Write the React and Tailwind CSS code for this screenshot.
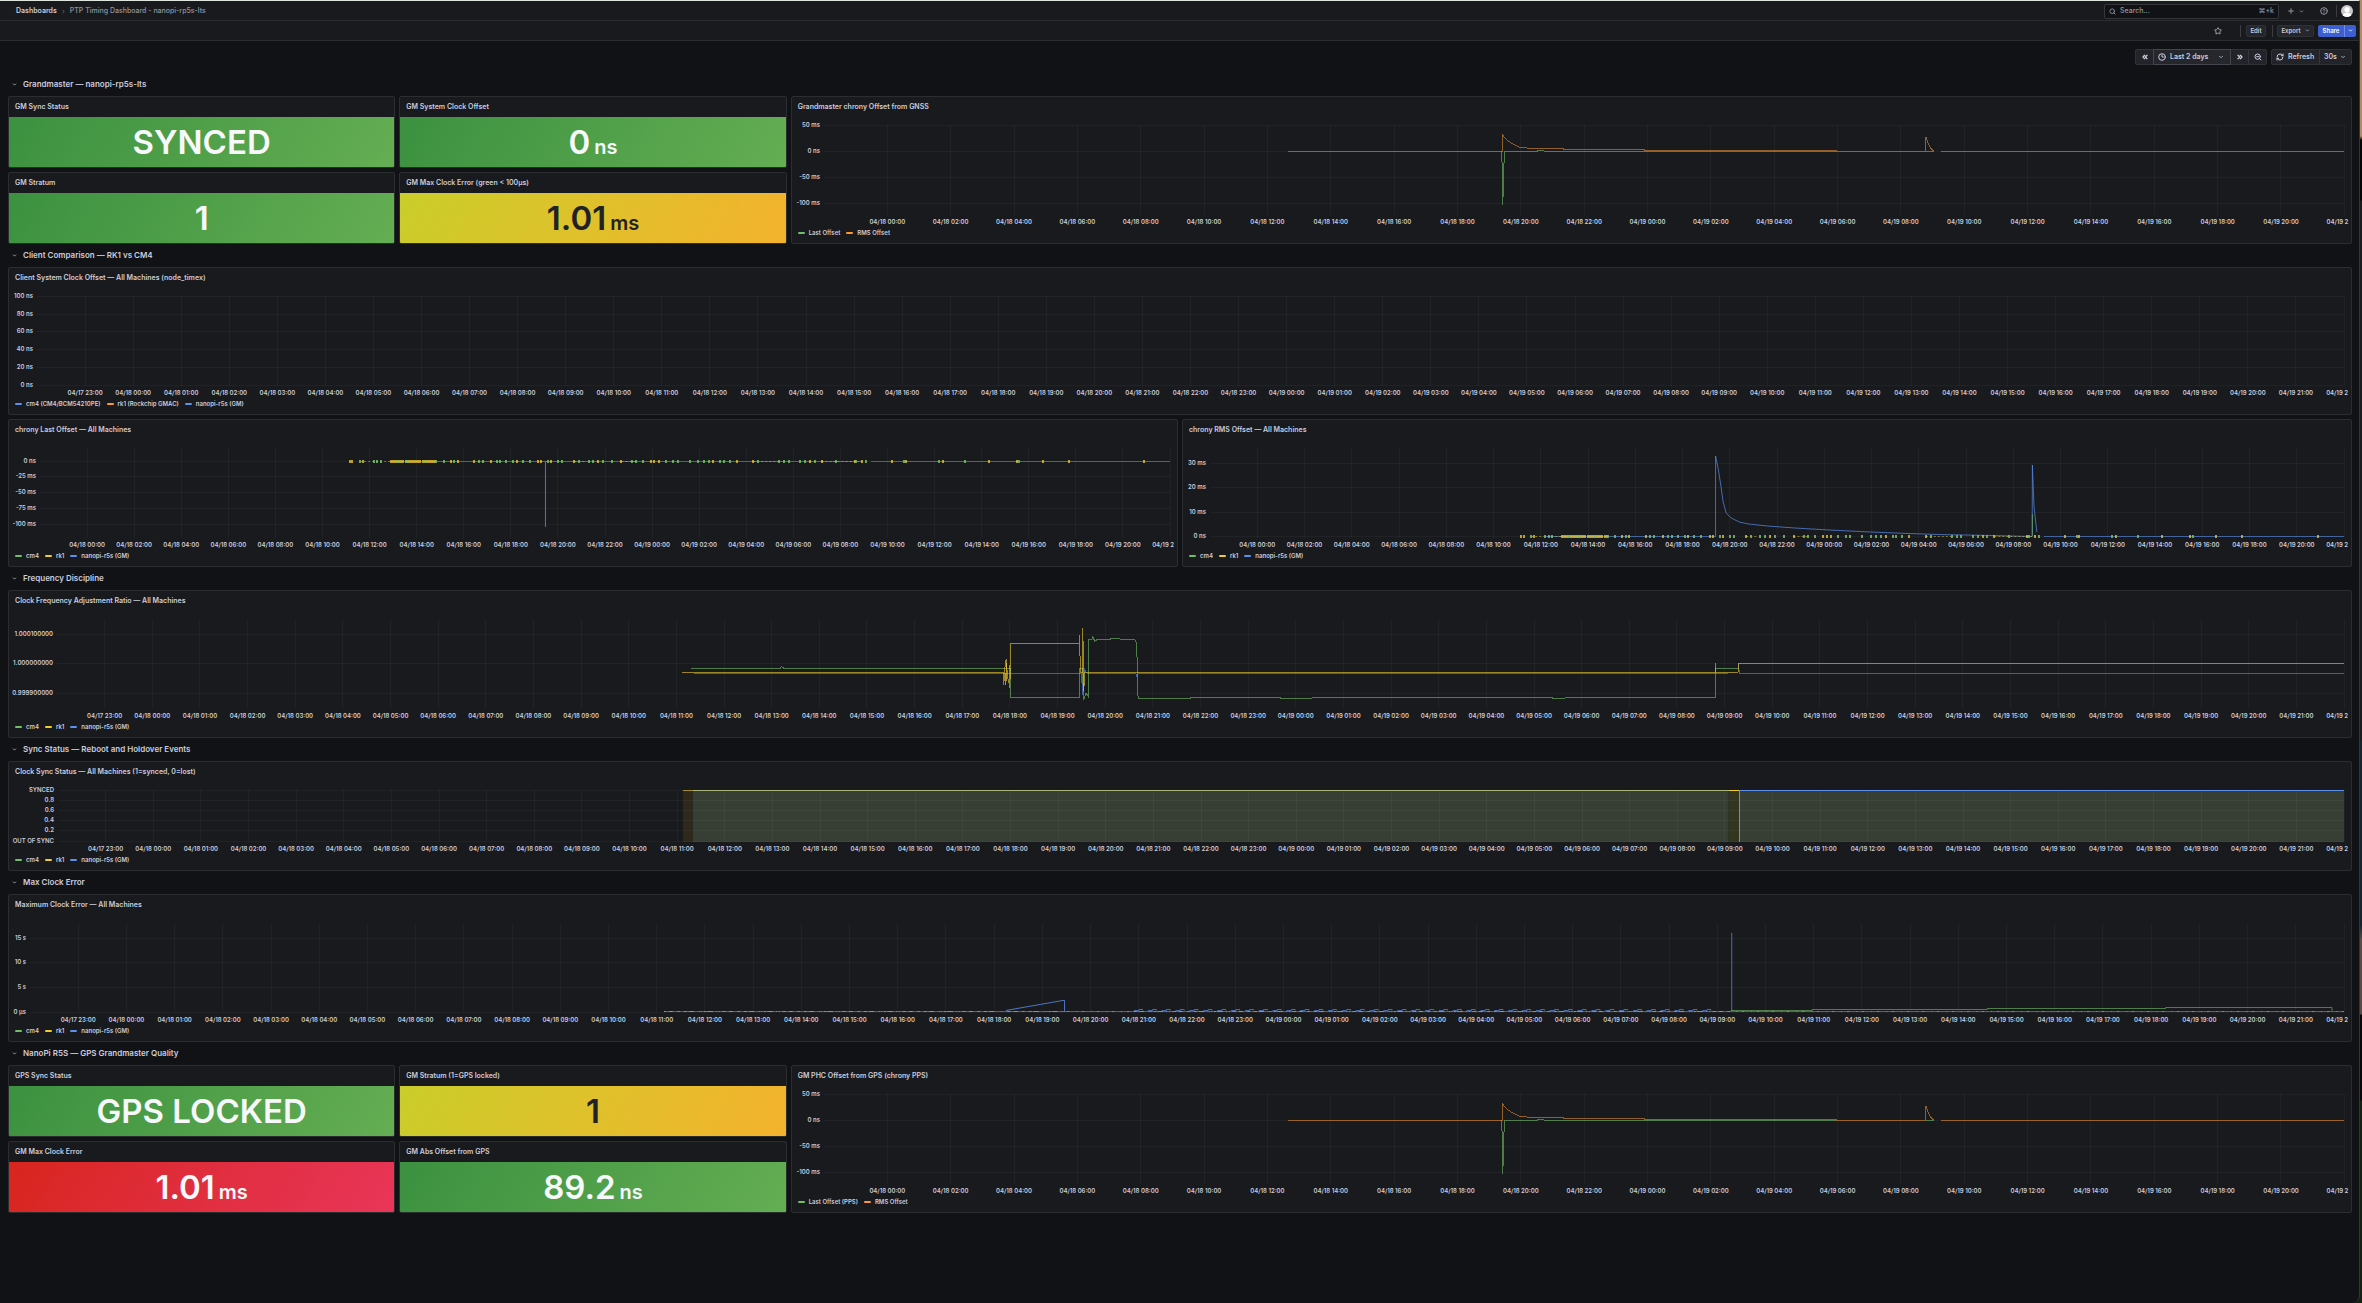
import React from 'react';
import { ChevronDown, ChevronsLeft, ChevronsRight, CircleHelp, Clock3, Plus, RefreshCw, Search, Star, ZoomOut } from 'lucide-react';

const GREEN = '#73bf69';
const YELLOW = '#f2cc2c';
const BLUE = '#5b8ff0';
const ORANGE = '#ff9830';

// the dashboards cover 48 hours, starting 04/17 22:00
const HOURS = 48;

const timeLabel = (h) => {
  if (h === HOURS) return '04/19 2';
  const day = 17 + Math.floor((h + 22) / 24);
  const hour = String((h + 22) % 24).padStart(2, '0');
  return `04/${day} ${hour}:00`;
};

// points are [hours since start, y inside the plot]
const toPath = (points) => points.map(([x, y], i) => `${i ? 'L' : 'M'}${x} ${y}`).join(' ');
const toMarks = (hours, y, h = 3) => hours.map((x) => `M${x} ${y}v${h}`).join(' ');
const range = (from, to, step) => {
  const out = [];
  for (let v = from; v <= to; v += step) out.push(Number(v.toFixed(3)));
  return out;
};

const Chart = ({ left, height = 90, step = 2, yTicks, lines = [], areas = [] }) => {
  const hours = range(step, HOURS, step);
  return (
    <div className={`${left} mr-[7px] mt-2`}>
      <svg className={`block w-full overflow-visible ${height === 90 ? 'h-[102px]' : 'h-16'}`}>
        <svg x="0" y="0" width="100%" height={height} viewBox={`0 0 ${HOURS} ${height}`} preserveAspectRatio="none">
          {areas.map((a) => (
            <rect key={a.from} x={a.from} y="0" width={a.to - a.from} height={height} fill={a.fill} />
          ))}
        </svg>
        <g stroke="#ccccdc" strokeOpacity="0.05" shapeRendering="crispEdges">
          {yTicks.map(([label, y]) => (
            <line key={label} x1="0" x2="100%" y1={y + 0.5} y2={y + 0.5} />
          ))}
          {hours.map((h) => (
            <line key={h} x1={`${(h / HOURS) * 100}%`} x2={`${(h / HOURS) * 100}%`} y1="0" y2={height} />
          ))}
        </g>
        <svg x="0" y="0" width="100%" height={height + 1} viewBox={`0 0 ${HOURS} ${height + 1}`} preserveAspectRatio="none">
          {lines.map((l, i) => (
            <path
              key={i}
              d={l.d}
              fill="none"
              stroke={l.color}
              strokeOpacity={l.opacity ?? 0.6}
              strokeWidth={l.width ?? 1}
              strokeDasharray={l.dash}
              vectorEffect="non-scaling-stroke"
              shapeRendering="crispEdges"
            />
          ))}
        </svg>
        <g fill="#ccccdc" fontSize="6" fontWeight="600">
          {yTicks.map(([label, y]) => (
            <text key={label} x="-4" y={y + 2} textAnchor="end">{label}</text>
          ))}
          {hours.map((h) => (
            <text
              key={h}
              x={`${(h / HOURS) * 100}%`}
              y={height + 9}
              dx={h === HOURS ? 4 : 0}
              textAnchor={h === HOURS ? 'end' : 'middle'}
            >
              {timeLabel(h)}
            </text>
          ))}
        </g>
      </svg>
    </div>
  );
};

const Legend = ({ items }) => (
  <ul className="flex h-3 items-center gap-1.5 px-1.5 text-[6px] font-semibold leading-3">
    {items.map(([name, color]) => (
      <li key={name} className="flex items-center gap-1">
        <span className="h-0.5 w-[7px] rounded-full" style={{ backgroundColor: color }} />
        {name}
      </li>
    ))}
  </ul>
);

const Panel = ({ title, className = '', children }) => (
  <section className={`flex min-w-0 flex-col overflow-hidden rounded-xs border border-[#2b2d31] bg-[#181a1d] ${className}`}>
    <h2 className="h-5 shrink-0 px-1.5 text-[7px] font-semibold leading-5">{title}</h2>
    {children}
  </section>
);

const tones = {
  green: 'from-[#3b9140] to-[#64ae53] text-[#f7f8fa]',
  yellow: 'from-[#c9cd2a] to-[#f4b22d] text-[#202226]',
  red: 'from-[#d8251c] to-[#e93558] text-[#f7f8fa]',
};

const Stat = ({ title, value, unit, tone }) => (
  <Panel title={title} className="h-[72px]">
    <p className={`flex flex-1 items-center justify-center bg-linear-120 font-semibold ${tones[tone]}`}>
      <span className="text-[33px] leading-[50px]">
        {value}
        {unit && <span className="ml-1 text-[20px]">{unit}</span>}
      </span>
    </p>
  </Panel>
);

const Row = ({ title, children }) => (
  <div className="flex flex-col gap-1">
    <h1 className="flex h-[15px] items-center">
      <button className="flex items-center gap-1.5 pl-1 text-[8px] font-semibold leading-[15px]">
        <ChevronDown className="size-[5px] text-[#b4b4c0]" strokeWidth={4} />
        {title}
      </button>
    </h1>
    {children}
  </div>
);

const MACHINES = [['cm4', GREEN], ['rk1', YELLOW], ['nanopi-r5s (GM)', BLUE]];

const OFFSET_TICKS = [['50 ms', 0], ['0 ns', 26], ['-50 ms', 52], ['-100 ms', 78]];

const offsetLines = [
  {
    color: GREEN,
    opacity: 0.6,
    d: toPath([[21.4, 26.5], [21.43, 80], [21.48, 26.5], [22.5, 26.5], [22.55, 25.5], [22.7, 25.5], [22.75, 26.5], [31.96, 26.5]]),
  },
  { color: GREEN, opacity: 0.6, d: toPath([[34.79, 26.5], [35.03, 26.5]]) },
  {
    color: ORANGE,
    opacity: 0.55,
    d: toPath([
      [14.64, 26.5], [21.42, 26.5], [21.43, 10], [21.5, 13], [21.6, 16], [21.75, 19], [21.98, 22.5], [22.19, 22.5],
      [22.2, 23.5], [23.34, 23.5], [23.35, 24.5], [25.9, 24.5], [25.91, 25.5], [31.96, 25.5], [31.97, 26.5],
      [34.78, 26.5], [34.79, 12], [34.86, 18], [34.93, 23], [35.03, 26],
    ]),
  },
  { color: ORANGE, opacity: 0.55, d: toPath([[35.26, 26.5], [48, 26.5]]) },
];

const greenMarks = [
  13.6, 14.18, 14.33, 14.49, 15.2, 15.6, 16.3, 16.83, 17.15, 17.6, 18.63, 18.8, 19.4, 19.56, 19.8, 20.1, 20.5, 20.8,
  21.6, 22, 22.16, 22.9, 23.3, 23.5, 23.9, 24.3, 25.14, 25.3, 25.6, 26.6, 26.9, 27.1, 27.6, 27.97, 28.2, 28.4, 28.9,
  29.05, 29.3, 30.5, 31.4, 31.6, 31.8, 32.3, 32.5, 32.9, 33.8, 34.65, 35.1, 36.7, 38.2, 39.3, 41.6,
];

const yellowMarks = [
  13.16, 13.27, 13.73, ...range(14.9, 16.8, 0.09), 17.46, 17.74, 18.45, 19.17, 20.25, 21.16, 21.3, 21.7, 22.7, 23.7,
  24.7, 25.95, 26.1, 26.3, 28.6, 29.6, 30.3, 32.7, 33.2, 34.6, 34.9, 36.2, 36.8, 38.35, 40.3, 41.5, 42.6, 43.7, 46.9,
];

const markLines = (y) => [
  { color: YELLOW, opacity: 0.5, dash: '2 2', d: `M13.6 ${y + 1.5}H14.9 M22.7 ${y + 1.5}h0.5 M24.7 ${y + 1.5}h0.6 M30.3 ${y + 1.5}h1.2 M33.2 ${y + 1.5}h1.6` },
  { color: YELLOW, opacity: 0.75, width: 2, d: toMarks(yellowMarks, y) },
  { color: GREEN, opacity: 0.85, width: 2, d: toMarks(greenMarks, y) },
];

const lastOffsetLines = [
  { color: BLUE, d: 'M14.9 13.5H34.9 M35.3 13.5H48' },
  { color: BLUE, opacity: 0.8, d: 'M21.47 13V79' },
  ...markLines(12),
];

const rmsLines = [
  { color: BLUE, d: 'M14.2 88.5H21.4' },
  {
    color: BLUE,
    opacity: 0.7,
    d: toPath([
      [21.4, 88.5], [21.4, 8], [21.52, 22], [21.62, 37], [21.72, 54], [21.85, 65], [22.06, 70], [22.4, 74], [22.8, 76],
      [23.6, 78], [24.75, 80], [26.2, 82], [27.96, 84], [29, 85], [30.8, 86.5], [33.1, 87.5], [34.8, 88.5], [34.81, 17],
      [34.88, 59], [35, 84],
    ]),
  },
  { color: GREEN, d: 'M34.81 66V88' },
  { color: BLUE, d: 'M35.3 88.5H48' },
  ...markLines(87),
];

const frequencyLines = [
  {
    color: BLUE,
    d: toPath([[13.36, 54.5], [21.5, 54.5], [21.53, 76], [21.56, 50], [21.62, 54.5], [22.64, 54.5], [22.66, 57], [22.7, 54.5], [35.07, 54.5]]),
  },
  { color: BLUE, d: toPath([[35.29, 44.5], [35.31, 54.5], [48, 54.5]]) },
  {
    color: GREEN,
    d: toPath([
      [13.3, 49.5], [15.18, 49.5], [15.2, 47.5], [15.26, 49.5], [20.01, 49.5], [20.01, 78.5], [21.46, 78.5], [21.47, 49.5],
      [21.52, 49.5], [21.55, 81], [21.6, 74], [21.64, 77], [21.64, 20.5], [21.72, 20.5], [21.74, 18], [21.78, 22],
      [21.84, 20.5], [22.1, 20.5], [22.12, 19.5], [22.5, 20.5], [22.62, 20.5], [22.66, 24], [22.69, 79.5], [23.79, 79.5],
      [23.8, 78.5], [25.66, 78.5], [25.7, 79.5], [26.3, 79.5], [26.38, 78.5], [31.38, 78.5], [31.4, 79.5], [31.64, 79.5],
      [31.66, 78.5], [34.81, 78.5], [34.81, 49.5], [35.29, 49.5],
    ]),
  },
  {
    color: YELLOW,
    d: toPath([
      [13.11, 53.5], [19.86, 53.5], [19.87, 66], [19.89, 51], [19.92, 40], [19.95, 58], [19.98, 64], [19.99, 46],
      [20.0, 69], [20.01, 24.5], [21.46, 24.5], [21.46, 16], [21.48, 53.5], [21.52, 53.5], [21.53, 9], [21.55, 72],
      [21.57, 53.5], [34.81, 53.5], [34.81, 44], [34.82, 53.5], [35.28, 53.5], [35.3, 44.5], [48, 44.5],
    ]),
  },
  { color: YELLOW, opacity: 0.7, d: 'M19.93 44V62 M19.9 54V66' },
];

const syncLines = [
  { color: YELLOW, opacity: 0.6, d: 'M13.12 0.5H13.33' },
  { color: '#a9b57b', opacity: 1, d: 'M13.33 0.5H35.08' },
  { color: YELLOW, opacity: 1, d: 'M35.08 0.5H35.31' },
  { color: BLUE, opacity: 1, d: 'M35.31 52V0.5H48' },
];

const syncAreas = [
  { from: 13.12, to: 13.33, fill: '#2e291b' },
  { from: 13.33, to: 35.08, fill: '#373f34' },
  { from: 35.08, to: 35.31, fill: '#33361f' },
  { from: 35.31, to: 48, fill: '#373f34' },
];

const teeth = range(22.9, 34.7, 0.2875).map((h) => `M${h} 87.5h0.1v-1h0.08v1`).join(' ');

const maxErrorLines = [
  { color: BLUE, d: 'M13.15 88.5H48' },
  { color: YELLOW, opacity: 0.5, dash: '2 3 4 6 1 4', d: 'M13.15 88.5H20 M20.3 88.5H21.5 M22.9 88.5H35.3' },
  { color: GREEN, opacity: 0.7, dash: '1 5 2 7', d: 'M13.3 88.5H48' },
  { color: BLUE, opacity: 0.8, d: 'M20.24 87.5L21.42 77.5H21.46V88' },
  { color: BLUE, opacity: 0.7, d: teeth },
  { color: BLUE, opacity: 0.7, d: 'M35.3 10V88' },
  { color: GREEN, d: 'M35.28 87.5H36.97V86.5H40.6V85.5H44.3V84.5H47.75V88' },
];

const Divider = () => <span className="h-3 w-px bg-[#3b3d43]" />;

const TopBar = () => (
  <header className="flex h-5 items-center justify-between border-b border-[#2b2d31] bg-[#181a1d] pl-4 pr-1.5 pt-px text-[7px]">
    <nav className="flex items-center gap-1">
      <a href="#dashboards" className="font-semibold">Dashboards</a>
      <ChevronDown className="size-[5px] -rotate-90 text-[#8e8e99]" strokeWidth={3} />
      <a href="#ptp" className="font-medium text-[#94959f]">PTP Timing Dashboard - nanopi-rp5s-lts</a>
    </nav>
    <div className="flex items-center">
      <label className="flex h-[15px] w-[175px] items-center gap-1 rounded-xs border border-[#34363b] bg-[#111216] px-1 text-[#94959f]">
        <Search className="size-[7px]" strokeWidth={3} />
        <input type="search" aria-label="Search" placeholder="Search..." className="min-w-0 flex-1 font-medium outline-none placeholder:text-[#94959f]" />
        <kbd className="font-[Inter,'DejaVu_Sans',sans-serif] text-[7px] font-medium">⌘+k</kbd>
      </label>
      <button aria-label="New" className="ml-2 flex items-center gap-1 text-[#94959f]">
        <Plus className="size-2" strokeWidth={3} />
        <ChevronDown className="size-[5px]" strokeWidth={4} />
      </button>
      <span className="ml-2"><Divider /></span>
      <button aria-label="Help" className="mx-2 text-[#94959f]"><CircleHelp className="size-2" strokeWidth={3} /></button>
      <Divider />
      <button aria-label="Profile" className="ml-1 size-3 overflow-hidden rounded-full bg-[#c9c9c9]">
        <svg viewBox="0 0 12 12" className="size-3">
          <circle cx="6" cy="4.6" r="2.6" fill="#fff" />
          <path d="M1.6 12c0-3 2-4.4 4.4-4.4s4.4 1.4 4.4 4.4z" fill="#fff" />
        </svg>
      </button>
    </div>
  </header>
);

const ToolBar = () => (
  <div className="flex h-5 items-center justify-end border-b border-[#2b2d31] bg-[#181a1d] pr-[3px] text-[6px] font-semibold">
    <button aria-label="Mark as favorite" className="mr-[18px] text-[#a4a5b0]"><Star className="size-2" strokeWidth={3} /></button>
    <Divider />
    <button className="ml-[5px] mr-1.5 h-3 w-5 rounded-xs border border-[#303238] bg-[#25272c]">Edit</button>
    <Divider />
    <button className="ml-1 flex h-3 w-[37px] items-center justify-center gap-1 rounded-xs border border-[#303238] bg-[#25272c]">
      Export
      <ChevronDown className="size-[5px]" strokeWidth={3} />
    </button>
    <div className="ml-1 flex h-3 text-white">
      <button className="w-[26px] rounded-l-xs bg-[#3d5fd2]">Share</button>
      <button aria-label="Share options" className="flex w-3 items-center justify-center rounded-r-xs border-l border-[#6f8be6] bg-[#3d5fd2]">
        <ChevronDown className="size-[5px]" strokeWidth={4} />
      </button>
    </div>
  </div>
);

const TimeControls = () => (
  <div className="flex h-4 justify-end gap-1 text-[7px] font-semibold">
    <div className="flex rounded-xs border border-[#303238] bg-[#222429]">
      <button aria-label="Move back" className="flex w-[17px] items-center justify-center"><ChevronsLeft className="size-2" strokeWidth={4} /></button>
      <button className="-my-px flex w-[78px] items-center gap-1 border border-[#44464d] bg-[#25272c] px-1">
        <Clock3 className="size-2" strokeWidth={3} />
        <span>Last 2 days</span>
        <ChevronDown className="ml-auto mr-0.5 size-[6px]" strokeWidth={3} />
      </button>
      <button aria-label="Move forward" className="flex w-[17px] items-center justify-center"><ChevronsRight className="size-2" strokeWidth={4} /></button>
      <button aria-label="Zoom out" className="flex w-[18px] items-center justify-center border-l border-[#34363b]"><ZoomOut className="size-2" strokeWidth={3} /></button>
    </div>
    <div className="flex rounded-xs border border-[#303238] bg-[#222429]">
      <button className="flex w-[47px] items-center gap-1 pl-1"><RefreshCw className="size-2" strokeWidth={3} />Refresh</button>
      <div className="flex w-8 items-center border-l border-[#34363b] pl-1">
        <select aria-label="Refresh interval" defaultValue="30s" className="w-4 appearance-none outline-none">
          <option>30s</option>
        </select>
        <ChevronDown className="size-[6px]" strokeWidth={3} />
      </div>
    </div>
  </div>
);

const App = () => (
  <div className="flex min-h-screen bg-[linear-gradient(#b28b62_0_136px,#050505_140px_200px,#191b1c_201px_740px,#13252e_741px_925px,#594c44_940px_1014px,#080808_1015px_1100px,#12230f_1101px)] font-[Inter,sans-serif] text-[#ccccdc]">
    <div className="mr-0.5 flex min-w-0 flex-1 flex-col rounded-br-lg border-r border-t border-r-[#34363b] border-t-[#dfe6e0] bg-[#111216]">
      <TopBar />
      <ToolBar />
      <main className="flex flex-col gap-1 pl-2 pr-[7px] pt-2">
        <div className="mb-2">
          <TimeControls />
        </div>
        <Row title="Grandmaster — nanopi-rp5s-lts">
          <div className="grid grid-cols-6 gap-1">
            <Stat title="GM Sync Status" value="SYNCED" tone="green" />
            <Stat title="GM System Clock Offset" value="0" unit="ns" tone="green" />
            <Panel title="Grandmaster chrony Offset from GNSS" className="col-span-4 row-span-2">
              <Chart left="ml-8" yTicks={OFFSET_TICKS} lines={offsetLines} />
              <Legend items={[['Last Offset', GREEN], ['RMS Offset', ORANGE]]} />
            </Panel>
            <Stat title="GM Stratum" value="1" tone="green" />
            <Stat title="GM Max Clock Error (green < 100µs)" value="1.01" unit="ms" tone="yellow" />
          </div>
        </Row>
        <Row title="Client Comparison — RK1 vs CM4">
          <Panel title="Client System Clock Offset — All Machines (node_timex)" className="h-[148px]">
            <Chart
              left="ml-7"
              step={1}
              yTicks={[['100 ns', 0], ['80 ns', 18], ['60 ns', 35], ['40 ns', 53], ['20 ns', 71], ['0 ns', 89]]}
            />
            <Legend items={[['cm4 (CM4/BCM54210PE)', BLUE], ['rk1 (Rockchip GMAC)', ORANGE], ['nanopi-r5s (GM)', BLUE]]} />
          </Panel>
          <div className="grid grid-cols-2 gap-1">
            <Panel title="chrony Last Offset — All Machines" className="h-[148px]">
              <Chart
                left="ml-[31px]"
                yTicks={[['0 ns', 13], ['-25 ms', 28], ['-50 ms', 44], ['-75 ms', 60], ['-100 ms', 76]]}
                lines={lastOffsetLines}
              />
              <Legend items={MACHINES} />
            </Panel>
            <Panel title="chrony RMS Offset — All Machines" className="h-[148px]">
              <Chart left="ml-[27px]" yTicks={[['30 ms', 15], ['20 ms', 39], ['10 ms', 64], ['0 ns', 88]]} lines={rmsLines} />
              <Legend items={MACHINES} />
            </Panel>
          </div>
        </Row>
        <Row title="Frequency Discipline">
          <Panel title="Clock Frequency Adjustment Ratio — All Machines" className="h-[148px]">
            <Chart
              left="ml-12"
              step={1}
              yTicks={[['1.000100000', 15], ['1.000000000', 44], ['0.999900000', 74]]}
              lines={frequencyLines}
            />
            <Legend items={MACHINES} />
          </Panel>
        </Row>
        <Row title="Sync Status — Reboot and Holdover Events">
          <Panel title="Clock Sync Status — All Machines (1=synced, 0=lost)" className="h-[110px]">
            <Chart
              left="ml-[49px]"
              height={52}
              step={1}
              yTicks={[['SYNCED', 0], ['0.8', 10], ['0.6', 20], ['0.4', 30], ['0.2', 40], ['OUT OF SYNC', 51]]}
              lines={syncLines}
              areas={syncAreas}
            />
            <Legend items={MACHINES} />
          </Panel>
        </Row>
        <Row title="Max Clock Error">
          <Panel title="Maximum Clock Error — All Machines" className="h-[148px]">
            <Chart
              left="ml-[21px]"
              step={1}
              yTicks={[['15 s', 15], ['10 s', 39], ['5 s', 64], ['0 µs', 89]]}
              lines={maxErrorLines}
            />
            <Legend items={MACHINES} />
          </Panel>
        </Row>
        <Row title="NanoPi R5S — GPS Grandmaster Quality">
          <div className="grid grid-cols-6 gap-1">
            <Stat title="GPS Sync Status" value="GPS LOCKED" tone="green" />
            <Stat title="GM Stratum (1=GPS locked)" value="1" tone="yellow" />
            <Panel title="GM PHC Offset from GPS (chrony PPS)" className="col-span-4 row-span-2">
              <Chart left="ml-8" yTicks={OFFSET_TICKS} lines={offsetLines} />
              <Legend items={[['Last Offset (PPS)', GREEN], ['RMS Offset', ORANGE]]} />
            </Panel>
            <Stat title="GM Max Clock Error" value="1.01" unit="ms" tone="red" />
            <Stat title="GM Abs Offset from GPS" value="89.2" unit="ns" tone="green" />
          </div>
        </Row>
      </main>
    </div>
  </div>
);

export default App;
